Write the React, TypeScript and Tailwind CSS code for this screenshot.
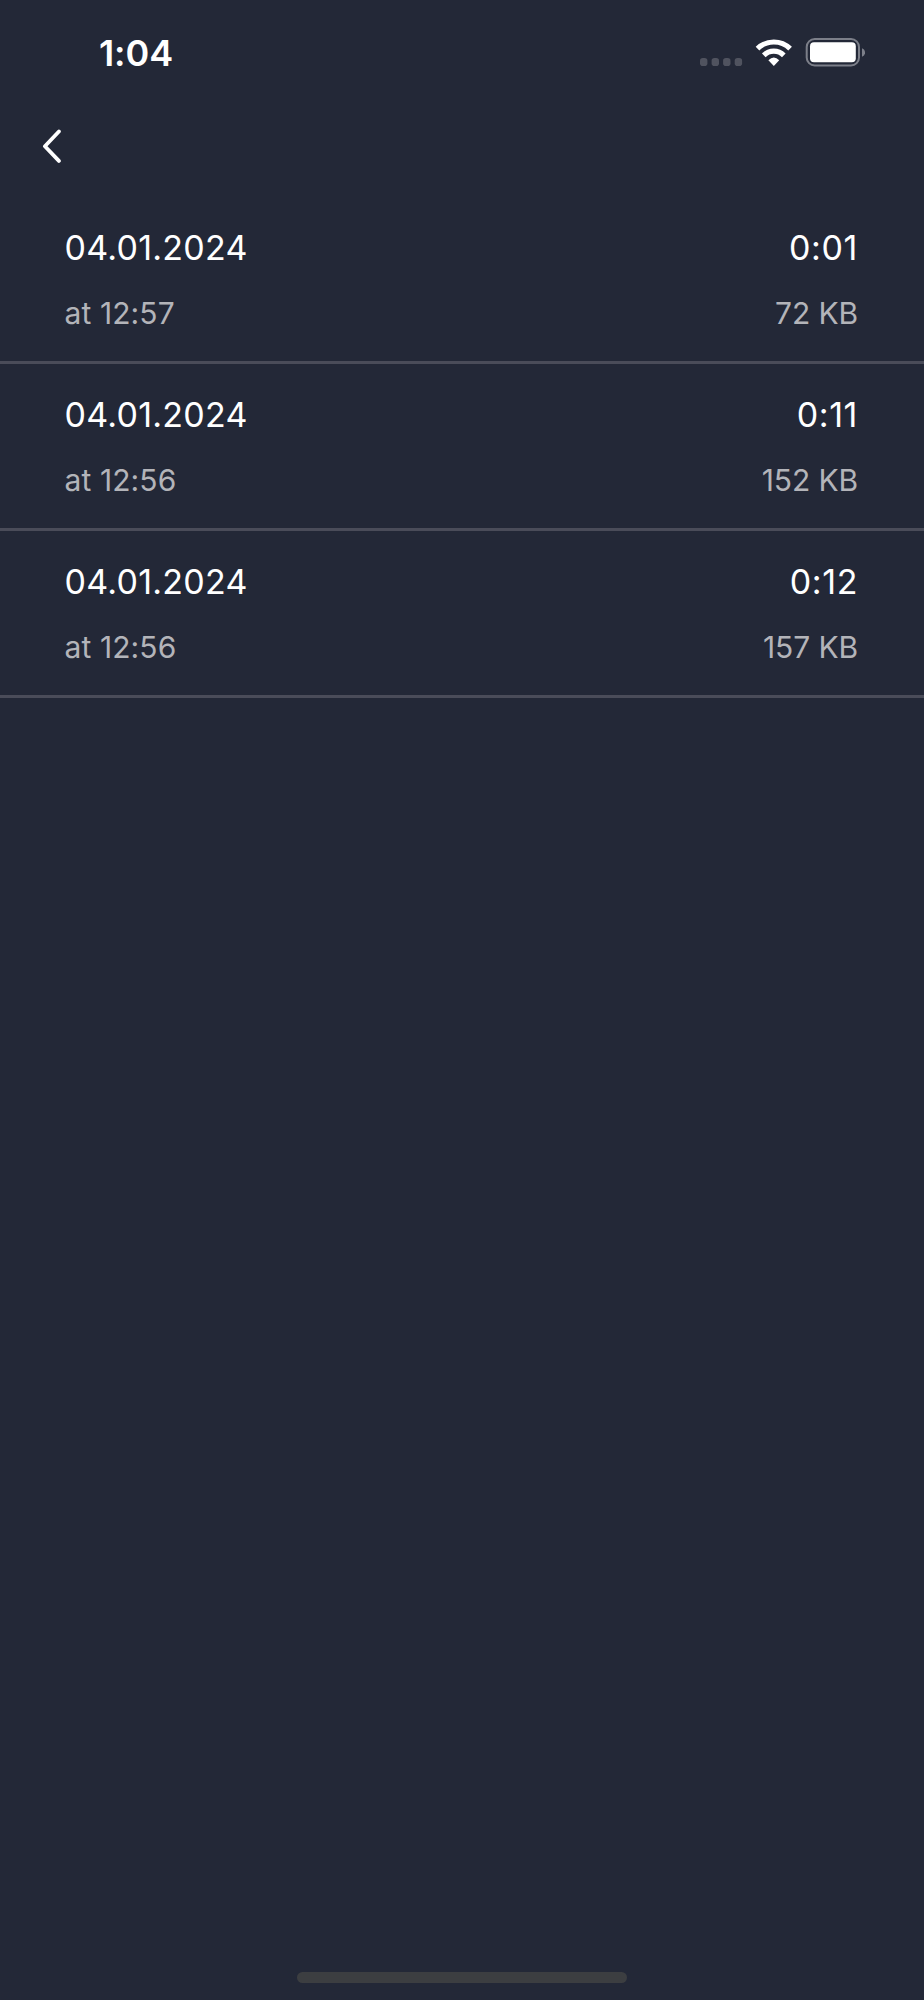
import React from 'react';

interface Recording {
  id: number;
  date: string;
  time: string;
  duration: string;
  size: string;
}

const recordings: Recording[] = [
  { id: 1, date: '04.01.2024', time: '12:57', duration: '0:01', size: '72 KB' },
  { id: 2, date: '04.01.2024', time: '12:56', duration: '0:11', size: '152 KB' },
  { id: 3, date: '04.01.2024', time: '12:56', duration: '0:12', size: '157 KB' },
];

function StatusBar() {
  return (
    <div className="flex h-[105px] items-start justify-between pl-[99px] pr-[59px] pt-[35px]">
      <span className="text-[36px] font-semibold leading-[36px] tracking-[-0.1px] text-white">1:04</span>
      <svg className="mt-[3px] h-[29px] w-[166px]" viewBox="699 38 166 29" fill="none">
        <g fill="#50535f">
          <rect x="700" y="58" width="7.4" height="8" rx="2.8" />
          <rect x="711.6" y="58" width="7.4" height="8" rx="2.8" />
          <rect x="723.1" y="58" width="7.4" height="8" rx="2.8" />
          <rect x="734.7" y="58" width="7.4" height="8" rx="2.8" />
        </g>
        <g stroke="#fff" strokeWidth="5.2">
          <path d="M757.5 48.6A23.4 23.4 0 0 1 790.1 48.6" />
          <path d="M763.8 55.3A14.3 14.3 0 0 1 783.8 55.3" />
        </g>
        <path d="M773.8 66L768.4 60.3Q773.8 54.9 779.2 60.3Z" fill="#fff" />
        <rect x="806.7" y="39" width="52.3" height="26.5" rx="8" stroke="#7c7f89" strokeWidth="2" />
        <rect x="810" y="42.2" width="45.8" height="20" rx="4" fill="#fff" />
        <path d="M862 48.2Q865.1 49.5 865.1 52.4T862 56.8Z" fill="#7c7f89" />
      </svg>
    </div>
  );
}

function Header() {
  return (
    <header className="flex h-[92px] items-start pl-[40px] pt-[24px]">
      <button type="button" aria-label="Back">
        <svg className="h-[36px] w-[22px]" viewBox="0 0 22 36" fill="none">
          <path
            d="M18.9 2.5L4.9 17.2L18.9 31.9"
            stroke="#fff"
            strokeWidth="3.8"
            strokeLinecap="round"
            strokeLinejoin="round"
          />
        </svg>
      </button>
    </header>
  );
}

function RecordingRow({ recording }: { recording: Recording }) {
  return (
    <li className="flex h-[167px] flex-col gap-[29px] border-b-3 border-[#4a4c59] pl-[64.5px] pr-[66px] pt-[33px]">
      <div className="flex justify-between text-[34px] leading-[36px] text-white">
        <span className="font-[370] tracking-[0.25px]">{recording.date}</span>
        <span className="font-[370] tracking-[0.6px]">{recording.duration}</span>
      </div>
      <div className="flex justify-between text-[30px] leading-[36px] text-[#b3b4b9]">
        <span className="font-[370] tracking-[0.1px]">at {recording.time}</span>
        <span className="font-[370] tracking-[-0.1px]">{recording.size}</span>
      </div>
    </li>
  );
}

export default function App() {
  return (
    <div className="flex h-[2000px] w-[924px] flex-col bg-[#232837] font-['Inter',sans-serif]">
      <StatusBar />
      <Header />
      <ul className="flex-1">
        {recordings.map((recording) => (
          <RecordingRow key={recording.id} recording={recording} />
        ))}
      </ul>
      <div className="mb-[17px] h-[11px] w-[330px] self-center rounded-full bg-[#3c3e41]" />
    </div>
  );
}
